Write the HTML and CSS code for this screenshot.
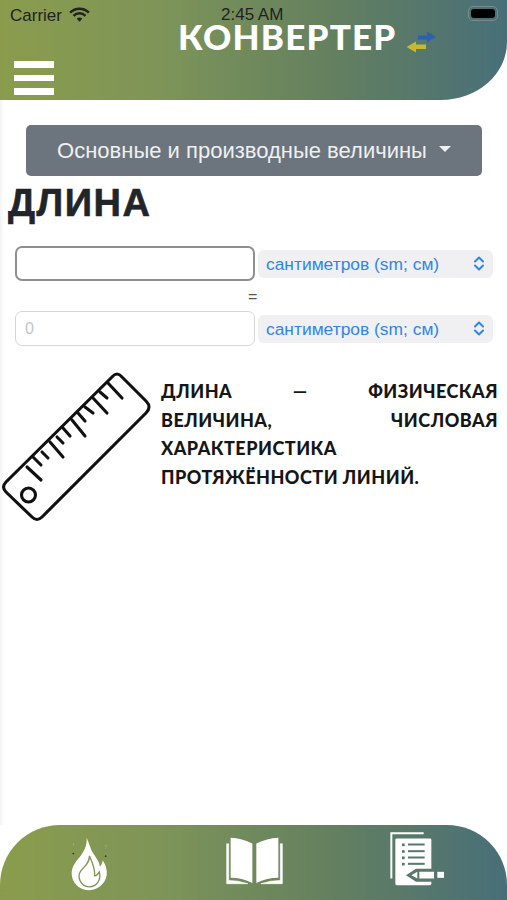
FILE: index.html
```html
<!DOCTYPE html>
<html lang="ru">
<head>
  <meta charset="UTF-8">
  <meta name="viewport" content="width=device-width, initial-scale=1.0">
  <title>Конвертер</title>
  <link rel="stylesheet" href="styles.css">
</head>
<body>
  <div class="statusbar">
    <span class="carrier">Carrier</span>
    <svg class="wifi" viewBox="0 0 22 16" width="21" height="15"><path d="M1 6 A14 14 0 0 1 21 6" fill="none" stroke="#222" stroke-width="2.6"/><path d="M4.6 9.4 A9 9 0 0 1 17.4 9.4" fill="none" stroke="#222" stroke-width="2.6"/><path d="M8 12.6 A4.4 4.4 0 0 1 14 12.6 L11 15.6 Z" fill="#222"/></svg>
    <span class="time">2:45 AM</span>
    <span class="battery"><span class="battery-fill"></span></span>
  </div>

  <header class="topbar">
    <div class="brand">
      <span class="brand-name">КОНВЕРТЕР</span>
      <svg class="brand-icon" viewBox="0 0 31 22" width="31" height="22">
        <path d="M12 4.5 H21 V0.5 L30 6 L21 11.5 V8.5 H12 Z" fill="#2b62ad"/>
        <path d="M20 13.5 H10 V10.5 L0.5 16 L10 21.5 V18 H20 Z" fill="#c4b92f"/>
      </svg>
    </div>
    <div class="burger"><span></span><span></span><span></span></div>
  </header>

  <main class="content">
    <button class="dropdown-btn">Основные и производные величины<span class="caret"></span></button>
    <h1 class="title">ДЛИНА</h1>

    <div class="convert-row">
      <input class="value-input active" type="text">
      <div class="unit-select">
        <select><option>сантиметров (sm; см)</option></select>
        <svg class="chevrons" viewBox="0 0 12 17" width="12" height="17"><path d="M2 6.5 L6 2.5 L10 6.5 M2 10.5 L6 14.5 L10 10.5" fill="none" stroke="#2f86e8" stroke-width="2" stroke-linecap="round" stroke-linejoin="round"/></svg>
      </div>
    </div>
    <div class="equals">=</div>
    <div class="convert-row">
      <input class="value-input" type="text" placeholder="0">
      <div class="unit-select">
        <select><option>сантиметров (sm; см)</option></select>
        <svg class="chevrons" viewBox="0 0 12 17" width="12" height="17"><path d="M2 6.5 L6 2.5 L10 6.5 M2 10.5 L6 14.5 L10 10.5" fill="none" stroke="#2f86e8" stroke-width="2" stroke-linecap="round" stroke-linejoin="round"/></svg>
      </div>
    </div>

    <div class="info">
      <svg class="ruler" viewBox="0 0 160 160" width="160" height="160">
        <g fill="none" stroke="#111" stroke-width="3.1" stroke-linecap="round" stroke-linejoin="round">
          <path d="M112 12 Q117 6 122 12 L146 36 Q152 42 146 48 L42 152 Q37 157 32 152 L6 127 Q1 122 6 117 Z"/>
          <circle cx="28.5" cy="130" r="7"/>
          <path d="M27 102 L41 115 M33 92 L41 100 M42 87 L48 93 M50 77 L63 92 M57 72 L63 78 M63 63 L70 71 M72 55 L85 71 M78 48 L85 56 M85 42 L93 48 M93 33 L107 48 M100 27 L107 33 M108 18 L122 33"/>
        </g>
      </svg>
      <p class="info-text">Длина — физическая величина, числовая характеристика протяжённости линий.</p>
    </div>
  </main>

  <footer class="tabbar">
    <svg class="tab-icon" viewBox="60 30 120 170" width="40" height="57">
      <path d="M110 38 C118 55 120 70 130 85 C140 100 148 110 150 125 C155 118 158 110 158 105 C168 120 172 135 170 150 C166 178 140 195 115 195 C88 195 65 172 65 145 C65 125 78 108 90 95 C100 82 112 62 110 38Z" fill="#fff"/>
      <path d="M118 92 C120 112 104 122 92 138 C80 156 92 184 118 185 C140 185 154 165 148 140 C143 148 140 152 134 152 C136 130 126 110 118 92Z" fill="none" stroke="#7f9652" stroke-width="4"/>
      <circle cx="70" cy="85" r="2.6" fill="#333"/>
      <circle cx="167" cy="93" r="2.6" fill="#333"/>
      <path d="M70 54 V62 M168 58 V66" stroke="#a9b78c" stroke-width="2"/>
    </svg>
    <svg class="tab-icon" viewBox="670 60 185 155" width="61" height="51">
      <path d="M690 68 Q725 70 756 86 V206 Q725 190 690 190 Z M835 68 Q800 70 768 86 V206 Q800 190 835 190 Z" fill="#fff"/>
      <path d="M678 86 V208 H742 Q712 198 684 198 V86 M847 86 V208 H782 Q812 198 841 198 V86" fill="#fff" stroke="#fff" stroke-width="2"/>
    </svg>
    <svg class="tab-icon tab-doc" viewBox="55 15 180 170" width="60" height="57">
      <path d="M68 160 V24 H165" fill="none" stroke="#fff" stroke-width="6"/>
      <rect x="80" y="40" width="108" height="140" rx="4" fill="#fff"/>
      <g fill="#59776a">
        <rect x="100" y="55" width="8" height="8"/><rect x="118" y="55" width="50" height="6"/>
        <rect x="100" y="75" width="8" height="8"/><rect x="118" y="75" width="50" height="6"/>
        <rect x="100" y="94" width="8" height="8"/><rect x="118" y="94" width="50" height="6"/>
        <rect x="100" y="113" width="8" height="8"/><rect x="118" y="113" width="50" height="6"/>
        <path d="M112 150 L142 131 H200 V170 H142 Z"/>
      </g>
      <path d="M128 150 L146 140 V160 Z M152 140 H196 V160 H152 Z" fill="#fff"/>
      <rect x="206" y="140" width="20" height="18" fill="#fff"/>
    </svg>
  </footer>
</body>
</html>
```

FILE: styles.css
```css
* {
  box-sizing: border-box;
}

html, body {
  height: 100%;
}

body {
  margin: 0;
  height: 900px;
  display: flex;
  flex-direction: column;
  overflow: hidden;
  background: #fff;
  font-family: "Liberation Sans", sans-serif;
}

.statusbar {
  position: absolute;
  z-index: 1;
  top: 0;
  left: 0;
  width: 507px;
  height: 30px;
  padding: 6px 9px 0 10px;
  display: flex;
  align-items: flex-start;
  color: #222;
  font-size: 17px;
}

.wifi {
  margin: 1px 0 0 7px;
}

.time {
  position: absolute;
  left: 221px;
  top: 5px;
  font-size: 17px;
}

.battery {
  margin-left: auto;
  width: 30px;
  height: 15px;
  padding: 2px;
  border: 1px solid #7d8a8c;
  border-radius: 5px;
}

.battery-fill {
  display: block;
  height: 100%;
  background: #000;
  border-radius: 3px;
}

.topbar {
  flex: none;
  height: 100px;
  padding: 14px 0 0 14px;
  background: linear-gradient(90deg, #8a9c4c 0%, #7f9558 30%, #64805f 65%, #486f79 100%);
  border-bottom-right-radius: 66px 58px;
}

.brand {
  position: relative;
  z-index: 2;
  display: flex;
  align-items: flex-start;
  padding-left: 164px;
}

.brand-name {
  color: #fff;
  font-family: Lato, sans-serif;
  font-weight: 900;
  font-size: 35px;
  line-height: 44px;
  letter-spacing: 1.2px;
}

.brand-icon {
  margin: 17px 0 0 10px;
}

.burger {
  width: 40px;
  margin-top: 3px;
  display: flex;
  flex-direction: column;
  gap: 7px;
}

.burger span {
  height: 6.5px;
  background: #fff;
}

.content {
  flex: 1;
  padding-top: 25px;
  background: linear-gradient(90deg, #f3f3f3, #fff 4px);
}

.dropdown-btn {
  display: flex;
  align-items: center;
  justify-content: center;
  width: 456px;
  height: 51px;
  margin-left: 26px;
  border: none;
  border-radius: 5px;
  background: #6c757d;
  color: #eef0f1;
  font-family: "Liberation Sans", sans-serif;
  font-size: 22px;
}

.caret {
  width: 0;
  height: 0;
  margin: 0 0 4px 12px;
  border-left: 6px solid transparent;
  border-right: 6px solid transparent;
  border-top: 6px solid #eef0f1;
}

.title {
  margin: 1px 0 0 8px;
  color: #212529;
  font-family: "Liberation Sans", sans-serif;
  font-weight: 700;
  font-size: 38px;
  line-height: 52px;
  letter-spacing: 1.5px;
  -webkit-text-stroke: 0.6px #212529;
}

.convert-row {
  display: flex;
  align-items: center;
  gap: 3px;
  padding-left: 15px;
}

.title + .convert-row {
  margin-top: 17px;
}

.value-input {
  width: 240px;
  height: 35px;
  padding: 0 9px;
  border: 1px solid #d6d6d6;
  border-radius: 7px;
  background: #fff;
  font-family: "Liberation Sans", sans-serif;
  font-size: 16px;
}

.value-input.active {
  border: 2px solid #8f8f8f;
}

.value-input::placeholder {
  color: #c4c4c4;
}

.unit-select {
  position: relative;
  width: 235px;
  height: 28px;
}

.unit-select select {
  appearance: none;
  width: 100%;
  height: 100%;
  padding: 0 0 0 8px;
  border: none;
  border-radius: 6px;
  background: #f0f0f2;
  color: #2f86e8;
  font-family: "Liberation Sans", sans-serif;
  font-size: 17.4px;
}

.chevrons {
  position: absolute;
  top: 5px;
  right: 8px;
}

.equals {
  height: 30px;
  padding-left: 248px;
  color: #555;
  font-size: 16px;
  line-height: 32px;
}

.info {
  display: flex;
  align-items: flex-start;
  margin-top: 19px;
}

.ruler {
  flex: none;
  margin-right: 1px;
}

.info-text {
  width: 337px;
  margin: 12px 0 0;
  color: #161616;
  font-family: Lato, sans-serif;
  font-weight: 900;
  font-size: 18px;
  line-height: 28.6px;
  letter-spacing: 0.5px;
  text-align: justify;
  text-transform: uppercase;
}

.tabbar {
  flex: none;
  height: 75px;
  padding-left: 7px;
  display: grid;
  grid-template-columns: repeat(3, 165px);
  justify-items: center;
  align-items: start;
  background: linear-gradient(90deg, #8a9c4c 0%, #7f9558 30%, #64805f 65%, #486f79 100%);
  border-radius: 60px 60px 0 0;
}

.tab-icon {
  margin-top: 10px;
}

.tab-doc {
  margin-top: 5px;
  margin-right: 5px;
}
```
